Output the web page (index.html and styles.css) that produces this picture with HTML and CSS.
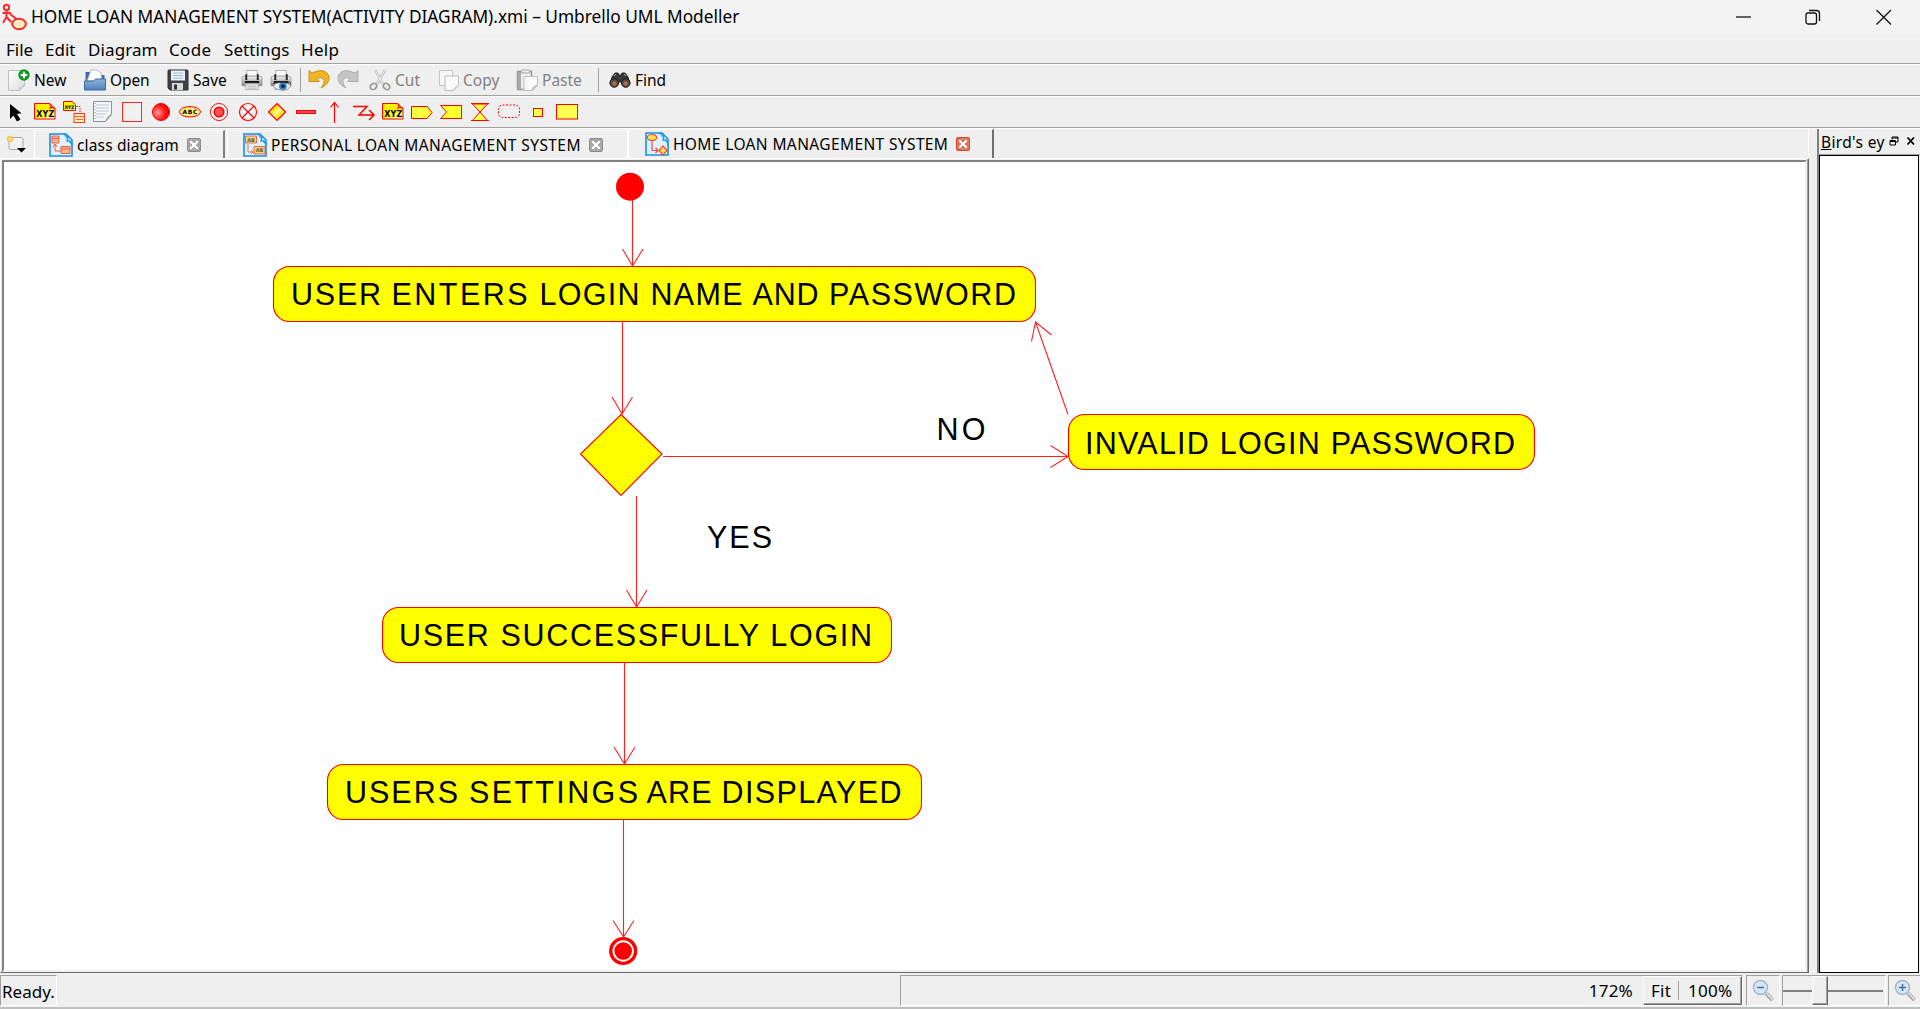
FILE: index.html
```html
<!DOCTYPE html>
<html lang="en">
<head>
<meta charset="utf-8">
<title>HOME LOAN MANAGEMENT SYSTEM(ACTIVITY DIAGRAM).xmi – Umbrello UML Modeller</title>
<link rel="stylesheet" href="styles.css">
</head>
<body>
<svg class="defs" width="0" height="0" aria-hidden="true">
  <defs>
    <linearGradient id="yel" x1="0" y1="0" x2="1" y2="1"><stop offset="0" stop-color="#fff200"/><stop offset=".5" stop-color="#fff200"/><stop offset="1" stop-color="#fffde0"/></linearGradient>
    <linearGradient id="stripe" x1="0" y1="0" x2="1" y2="1"><stop offset="0" stop-color="#fffbd0"/><stop offset=".35" stop-color="#ffe600"/><stop offset=".5" stop-color="#fff9b0"/><stop offset=".65" stop-color="#ffe600"/><stop offset="1" stop-color="#fff6a0"/></linearGradient>
    <linearGradient id="blue" x1="0" y1="0" x2="0" y2="1"><stop offset="0" stop-color="#8fb3dc"/><stop offset="1" stop-color="#4f80bb"/></linearGradient>
    <linearGradient id="page" x1="0" y1="0" x2="1" y2="1"><stop offset="0" stop-color="#fff"/><stop offset="1" stop-color="#dcdcdc"/></linearGradient>
    <linearGradient id="metal" x1="0" y1="0" x2="0" y2="1"><stop offset="0" stop-color="#f4f4f4"/><stop offset="1" stop-color="#8a8a8a"/></linearGradient>
    <radialGradient id="ball" cx=".3" cy=".55" r=".7"><stop offset="0" stop-color="#ff9c9c"/><stop offset=".6" stop-color="#ff1a1a"/><stop offset="1" stop-color="#e00000"/></radialGradient>
    <g id="doc"><path d="M1 1h16l6 6v16H1z" fill="#dff1ff" stroke="#1b8fe6" stroke-width="1.600"/><path d="M14 1c5 0 6 3 4 7c4-1 5 2 5 5" fill="#58b4f0" stroke="#1b8fe6" stroke-width="1.200"/></g>
    <g id="xyz"><path d="M1.500 3.500h15l5.500 5v10.500h-20.500z" fill="url(#yel)" stroke="#f00"/><path d="M15.500 3.500q4 1 1.500 4.500q4-1 5 1" fill="#ff0" stroke="#f00" stroke-width="1.200"/><text x="12.200" y="17.300" class="glyph" text-anchor="middle" font-size="8" textLength="18">XYZ</text></g>
    <g id="printer"><path d="M6 1h11v8H6z" fill="#fafafa" stroke="#aaa"/><path d="M8 7h7" stroke="#aaa"/><path d="M1 9q0-2 2-2h17q2 0 2 2v8H1z" fill="url(#metal)" stroke="#888" stroke-width=".7"/><path d="M4.500 5h2v6h-2zM16.500 5h2v6h-2z" fill="#222"/><path d="M4 13h15" stroke="#111" stroke-width="2"/><path d="M5 15h13v6H5z" fill="#e9e9e9" stroke="#999" stroke-width=".7"/><path d="M7 17.500h9M7 19.500h9" stroke="#bbb"/></g>
    <g id="lens"><path d="M14 14l6.500 7" stroke="#999" stroke-width="4"/><path d="M14 13.500l6.500 7" stroke="#ddd" stroke-width="2"/><circle cx="8.500" cy="8.500" r="7" fill="#d3e6f6" stroke="#a9b4c4" stroke-width="1.500"/></g>
    <g id="copybox"><path d="M1.500 1.500h13v15h-13z" fill="#f6f6f6" stroke="#c4c4c4"/><path d="M7 7h13.500v10l-5 4.500H7z" fill="#fafafa" stroke="#bcbcbc"/><path d="M15.500 21.500q1-4 5-4.500" fill="#ddd" stroke="#bbb"/></g>
  </defs>
</svg>

<div class="window">
  <header class="titlebar">
    <svg class="app-icon" viewBox="0 0 26 26"><g fill="none" stroke="#ff2a2a" stroke-width="2"><circle cx="5.500" cy="3.500" r="2.700"/><path d="M5.500 6v7M1.500 9h8.500M5.500 13l-3.500 6M5.500 13l4.500 5"/><path d="M9 10l9 7"/></g><ellipse cx="18" cy="20" rx="6.800" ry="5.300" fill="#fbeec0" stroke="#ff2a2a" stroke-width="2"/></svg>
    <h1 class="title">HOME LOAN MANAGEMENT SYSTEM(ACTIVITY DIAGRAM).xmi – Umbrello UML Modeller</h1>
    <div class="controls">
      <svg viewBox="0 0 16 16"><path d="M0 8h15" /></svg>
      <svg viewBox="0 0 16 16"><rect x="0" y="4" width="10.500" height="11" rx="2"/><path d="M3 1.500h7.500q3 0 3 3v7.500"/></svg>
      <svg viewBox="0 0 16 16"><path d="M.5 1l14.500 14.500M15 1L.5 15.500"/></svg>
    </div>
  </header>

  <nav class="menubar"><span class="m1">File</span><span class="m2">Edit</span><span class="m3">Diagram</span><span class="m4">Code</span><span class="m5">Settings</span><span class="m6">Help</span></nav>

  <div class="toolbar main">
    <div class="tool"><svg viewBox="0 0 22 22"><path d="M.5 1.500h16v15l-5 5H.5z" fill="url(#page)" stroke="#c0c0c0"/><path d="M11 21.500q1-5 5.500-5z" fill="#fff" stroke="#bbb"/><circle cx="16" cy="6" r="5.700" fill="#0c9a22"/><path d="M16 2.700v6.600M12.700 6h6.600" stroke="#fff" stroke-width="2.200"/></svg><span class="w-new">New</span></div>
    <div class="tool"><svg viewBox="0 0 22 22"><path d="M1.500 3h9l2 3h8v8h-19z" fill="#3f6ea8"/><path d="M3 12l4-11h6l4 3 1 8z" fill="#fff" stroke="#aaa" stroke-width=".8"/><path d="M.5 12h9l2-2h10v11H.5z" fill="url(#blue)" stroke="#3b6aa5"/></svg><span class="w-open">Open</span></div>
    <div class="tool"><svg viewBox="0 0 22 22"><path d="M1 2q0-1 1-1h18q1 0 1 1v19H3l-2-2z" fill="#404347" stroke="#2c2e31"/><path d="M4 1.500h14v10H4z" fill="#eaf1f8"/><path d="M6 4h10M6 6.500h10M6 9h10" stroke="#a9bccd"/><path d="M5 14h11v7H5z" fill="#d8d8d8"/><path d="M7 15.500h3v5H7z" fill="#333"/></svg><span class="w-save">Save</span></div>
    <div class="tool"><svg viewBox="0 0 23 22"><use href="#printer"/></svg></div>
    <div class="tool"><svg viewBox="0 0 23 22"><use href="#printer"/><path d="M3 17.500q5-5 10-3q6-1 9 3q-4 4.500-8 4.500q-6 0-11-4.500z" fill="#eef" stroke="#666" stroke-width=".6"/><circle cx="13.500" cy="17.500" r="4" fill="#2f7fc0"/><circle cx="13.500" cy="17.500" r="1.700" fill="#111"/><path d="M3 15q6-4 10-2q6-2 9 2" fill="none" stroke="#222"/></svg></div>
    <i class="sep"></i>
    <div class="tool"><svg viewBox="0 0 22 22"><path d="M1 1.500l3 2.500q13-6 17 3q1 8-8 12q5-6 2-9.500q-3-2-6 .5l2.500 2.500H1z" fill="#f0b429" stroke="#c68a0a" stroke-width=".9"/></svg></div>
    <div class="tool"><svg viewBox="0 0 22 22"><path d="M21 1.500l-3 2.500q-13-6-17 3q-1 8 8 12q-5-6-2-9.500q3-2 6 .5l-2.500 2.500H21z" fill="#c4c4c4" stroke="#aaa" stroke-width=".9"/></svg></div>
    <div class="tool off"><svg viewBox="0 0 22 22"><path d="M6.500 1l7 14M16 1L8 15" stroke="#bbb" stroke-width="2.600" fill="none"/><path d="M6.500 1l7 14M16 1L8 15" stroke="#f3f3f3" fill="none"/><ellipse cx="4.500" cy="17.500" rx="3.500" ry="2.700" transform="rotate(-40 4.500 17.500)" fill="none" stroke="#999" stroke-width="1.600"/><ellipse cx="17.500" cy="17.500" rx="3.500" ry="2.700" transform="rotate(40 17.500 17.500)" fill="none" stroke="#999" stroke-width="1.600"/></svg><span class="w-cut">Cut</span></div>
    <div class="tool off copy"><svg viewBox="0 0 22 22"><use href="#copybox"/></svg><span class="w-copy">Copy</span></div>
    <div class="tool off"><svg viewBox="0 0 22 22"><path d="M1.500 2.500h14v18h-14z" fill="#eee" stroke="#999" stroke-width="1.500"/><path d="M2 3v17h3V3z" fill="#aaa"/><path d="M5.500 1h8v3h-8z" fill="#eee" stroke="#aaa"/><path d="M8 7.500h13.500v9l-5 5H8z" fill="#fafafa" stroke="#bcbcbc"/><path d="M16 21.500q.5-5 5.500-5z" fill="#ddd" stroke="#bbb"/></svg><span class="w-paste">Paste</span></div>
    <i class="sep"></i>
    <div class="tool"><svg viewBox="0 0 22 22"><path d="M3 8l3-4h3l2 3 2-3h3l3 4 2 7h-8l-2-3-2 3H1z" fill="#3a3a3a" stroke="#222"/><circle cx="5.300" cy="14" r="4.300" fill="#4a4a4a" stroke="#1d1d1d"/><circle cx="16.700" cy="14" r="4.300" fill="#4a4a4a" stroke="#1d1d1d"/><circle cx="5.300" cy="14.500" r="2.300" fill="#b86a33"/><circle cx="16.700" cy="14.500" r="2.300" fill="#b86a33"/><path d="M5 7l2-2M15 5l2 2" stroke="#aaa"/></svg><span class="w-find">Find</span></div>
  </div>

  <div class="toolbar shapes">
    <svg viewBox="0 0 24 24"><path d="M6 4v15l3.500-3.500 3.500 6 3.500-2-3.500-5.500 4.500-.7z" fill="#000"/></svg>
    <svg viewBox="0 0 24 24"><use href="#xyz"/></svg>
    <svg viewBox="0 0 24 24"><path d="M1.500 1.500h8.500l3.500 3v6h-12z" fill="url(#yel)" stroke="#f00"/><text x="7.500" y="9.300" class="glyph" text-anchor="middle" font-size="4.800" textLength="10">XYZ</text><path d="M14.500 6.500h3.500v7" fill="none" stroke="#f00" stroke-dasharray="1.500 1"/><rect x="12" y="13.500" width="10.500" height="9" fill="#fff3a0" stroke="#f33"/><path d="M12 16.500h10M14 19.500h7" stroke="#f55"/></svg>
    <svg viewBox="0 0 24 24"><path d="M2.500 1.500h18v13l-6 7h-12z" fill="#f4f7f9" stroke="#8b9094"/><path d="M5 5h13M5 8h13M5 11h13M5 14h10M5 17h8" stroke="#b9c6cf"/><path d="M4 3v17" stroke="#888" stroke-dasharray="1 2"/><path d="M14.500 21.500q2-6 6-7z" fill="#ddd" stroke="#999"/></svg>
    <svg viewBox="0 0 24 24"><rect x="2.500" y="2.500" width="19" height="19" fill="#f1f1f1" stroke="#f22"/></svg>
    <svg viewBox="0 0 24 24"><circle cx="12" cy="12" r="8.500" fill="url(#ball)" stroke="#e00"/></svg>
    <svg viewBox="0 0 24 24"><ellipse cx="12" cy="11.800" rx="10.500" ry="5.200" fill="#ffef7a" stroke="#f00"/><text x="12" y="14" class="glyph" text-anchor="middle" font-size="6" textLength="15">ABC</text></svg>
    <svg viewBox="0 0 24 24"><circle cx="12" cy="12" r="8.500" fill="#fff" stroke="#f00"/><circle cx="12" cy="12" r="4.800" fill="#ff5050" stroke="#f00" stroke-width="1.600"/></svg>
    <svg viewBox="0 0 24 24"><circle cx="12" cy="12" r="8.500" fill="#fff" stroke="#f00" stroke-width="1.200"/><path d="M6 6l12 12M18 6L6 18" stroke="#f00" stroke-width="1.200"/></svg>
    <svg viewBox="0 0 24 24"><path d="M12 3.500l8.500 8.500-8.500 8.500L3.500 12z" fill="url(#stripe)" stroke="#f00" stroke-width="1.200"/></svg>
    <svg viewBox="0 0 24 24"><rect x="2.500" y="10.500" width="19" height="3" fill="#ff4a4a" stroke="#e00"/></svg>
    <svg viewBox="0 0 24 24"><path d="M11.500 23V3M7.500 7.500l4-5 4 5" fill="none" stroke="#f00" stroke-width="1.200"/></svg>
    <svg viewBox="0 0 24 24"><path d="M1 6.500h14L7 15h14.500M17 10l5 5-5 5" fill="none" stroke="#f00" stroke-width="1.500"/></svg>
    <svg viewBox="0 0 24 24"><use href="#xyz"/></svg>
    <svg viewBox="0 0 24 24"><path d="M1.500 6.500h15.500l5 6-5 6H1.500z" fill="#ffff40" stroke="#f00"/></svg>
    <svg viewBox="0 0 24 24"><path d="M1.500 5.500h21v13h-21l6-6.500z" fill="#ffff30" stroke="#f00"/></svg>
    <svg viewBox="0 0 24 24"><path d="M3 3.500h18M3 20.500h18" fill="none" stroke="#f00"/><path d="M4.500 4h15L12 12zM4.500 20.500h15L12 12z" fill="#ffff50" stroke="#f00"/></svg>
    <svg viewBox="0 0 24 24"><rect x="1.500" y="5" width="21" height="12.500" rx="4" fill="none" stroke="#f00" stroke-dasharray="2 1.500"/></svg>
    <svg viewBox="0 0 24 24"><rect x="7.500" y="8.500" width="9" height="8" fill="#ffff50" stroke="#f00"/></svg>
    <svg viewBox="0 0 24 24"><rect x="1.500" y="4.500" width="21" height="14.500" fill="#ffff50" stroke="#f00"/></svg>
  </div>

  <div class="body">
    <main class="pane">
      <div class="tabs">
        <div class="newtab"><svg viewBox="0 0 22 20"><path d="M3 2.500h12q2 0 2 2v8q0 2-2 2H5q-2 0-2-2z" fill="#f2f2f2" stroke="#aaa"/><circle cx="4" cy="4" r="3.200" fill="#f6c94c"/><circle cx="4" cy="4" r="1.300" fill="#fff3b0"/><path d="M11 13h9l-4.500 4.500z" fill="#000"/></svg></div>
        <div class="tab t1"><svg viewBox="0 0 24 24"><use href="#doc"/><g fill="#fbb98a" stroke="#f05a4a"><path d="M3 3h7v7H3zM12 13.500h9v7h-9z"/><path d="M3 5.500h7M12 16h9" /><path d="M6 11v7h6M4 14l2-3 2 3" fill="none"/></g></svg><span class="w-t1">class diagram</span><b class="close"></b></div>
        <div class="tab t2"><svg viewBox="0 0 24 24"><use href="#doc"/><g fill="#e8d08a" stroke="#e9603a" stroke-width=".9"><path d="M2.500 3h11v7h-11zM11 13.500h11v7.500H11z"/><path d="M5 11v8h5M8 17l2 2-2 2" fill="none"/></g><text x="8" y="8.500" class="glyph sm" text-anchor="middle" font-size="5">AB</text><text x="16.500" y="19.300" class="glyph sm" text-anchor="middle" font-size="5">AB</text></svg><span class="w-t2">PERSONAL LOAN MANAGEMENT SYSTEM</span><b class="close"></b></div>
        <div class="tab t3"><svg viewBox="0 0 24 24"><use href="#doc"/><g stroke="#ee4b3a" stroke-width="1.200" fill="#ffe14a"><ellipse cx="7" cy="5.500" rx="4.700" ry="3"/><path d="M18 14l4 4.500-4 4.500-4-4.500z"/><path d="M7 9v9.500h6M10.500 16l2.500 2.500-2.500 2.500" fill="none"/></g></svg><span class="w-t3">HOME LOAN MANAGEMENT SYSTEM</span><b class="close hot"></b></div>
      </div>
      <div class="frame">
        <svg class="canvas" viewBox="4 162 1801 808">
          <g class="line">
            <path d="M632.500 200V266M622.500 249l10 17 10.500-17"/>
            <path d="M622.500 322V414M612 397l10 17 10.500-17"/>
            <path d="M663 456.500H1068M1050.500 445.500l17.500 11-17.500 11"/>
            <path d="M1068 414.500L1035.500 322M1031.500 341.500l4-19.500 16 13"/>
            <path d="M636.500 496V607M626.500 590l10 17 10.500-17"/>
            <path d="M624.500 663V764M614 747l10.500 17 10.500-17"/>
            <path d="M623.500 820V937M613 920.500l10.500 16.500 10.500-16.500"/>
          </g>
          <circle cx="630" cy="186.700" r="14" fill="#f00"/>
          <g class="node">
            <rect x="273.500" y="266.500" width="762" height="55" rx="16"/>
            <path d="M621 414.500l41 39.500-41 41.500-40.500-41.500z"/>
            <rect x="1068.500" y="414.500" width="466" height="55" rx="16"/>
            <rect x="382.500" y="607.500" width="509" height="55" rx="16"/>
            <rect x="327.500" y="764.500" width="594" height="55" rx="16"/>
          </g>
          <circle cx="623.200" cy="951" r="12.400" fill="#fff" stroke="#f00" stroke-width="3.400"/>
          <circle cx="623.200" cy="951" r="8.800" fill="#f00"/>
          <g class="label">
            <text y="304.500"><tspan x="291" textLength="90">USER</tspan> <tspan x="391.500" textLength="136">ENTERS</tspan> <tspan x="539.500" textLength="100">LOGIN</tspan> <tspan x="650.500" textLength="92">NAME</tspan> <tspan x="752.500" textLength="66">AND</tspan> <tspan x="829" textLength="187">PASSWORD</tspan></text>
            <text x="936.500" y="440" textLength="49">NO</text>
            <text x="1085" y="453.500" textLength="430">INVALID LOGIN PASSWORD</text>
            <text x="707" y="548" textLength="65">YES</text>
            <text x="399" y="645.500" textLength="473">USER SUCCESSFULLY LOGIN</text>
            <text y="802.500"><tspan x="345" textLength="113">USERS</tspan> <tspan x="469" textLength="169">SETTINGS</tspan> <tspan x="646.500" textLength="65">ARE</tspan> <tspan x="721.500" textLength="180">DISPLAYED</tspan></text>
          </g>
        </svg>
      </div>
    </main>
    <aside class="dock">
      <div class="dock-head"><span class="dock-title"><u>B</u>ird's eye</span><svg viewBox="0 0 28 10"><path d="M3 3.500V1h6v5H7M3 2h6" /><path d="M1 4.500h5.500V9H1zM1 5.500h5.500"/><path d="M18.500 1.500l6.500 7M25 1.500l-6.500 7" stroke-width="1.800"/></svg></div>
      <div class="dock-view"></div>
    </aside>
  </div>

  <footer class="status">
    <div class="cell ready">Ready.</div>
    <div class="cell zoom"><span class="pct">172%</span><div class="btn"><span>Fit</span><span class="hundred">100%</span></div></div>
    <div class="cell mag"><svg viewBox="0 0 23 23"><use href="#lens"/><path d="M5 8.500h7" stroke="#4a6f9c" stroke-width="1.500"/></svg></div>
    <div class="cell slider"><div class="track"></div><div class="thumb"></div><div class="track rest"></div></div>
    <div class="cell mag last"><svg viewBox="0 0 23 23"><use href="#lens"/><path d="M5 8.500h7M8.500 5v7" stroke="#4a6f9c" stroke-width="1.500"/></svg></div>
  </footer>
</div>
</body>
</html>
```
FILE: styles.css
```css
* { box-sizing: border-box; }
body { margin: 0; background: #efefef; color: #000; overflow: hidden; }
.defs { position: absolute; }
.window {
  width: 1920px; height: 1009px; display: flex; flex-direction: column;
  background: #efefef; font: 17px "Noto Sans", sans-serif;
}
svg { display: block; flex: none; overflow: visible; }
span { white-space: nowrap; }
.glyph { font-family: "DejaVu Sans", sans-serif; font-weight: bold; fill: #000; }
.glyph.sm { fill: #6b6420; }

.titlebar { height: 34px; background: #f3f3f3; display: flex; align-items: center; }
.app-icon { width: 26px; height: 26px; margin: 0 4px 0 1px; }
.title { margin: 0; font-size: 17.3px; font-weight: 400; line-height: 34px; white-space: nowrap; }
.controls { margin-left: auto; display: flex; gap: 54px; padding-right: 28px; }
.controls svg { width: 16px; height: 16px; fill: none; stroke: #111; stroke-width: 1.3; }

.menubar { height: 30px; border-bottom: 1px solid #a0a0a0; display: flex; padding-left: 6px; line-height: 31px; }
.m1 { width: 39px; }
.m2 { width: 43px; }
.m3 { width: 81px; letter-spacing: .1px; }
.m4 { width: 55px; letter-spacing: .3px; }
.m5 { width: 77px; letter-spacing: .1px; }
.m6 { letter-spacing: .3px; }

.toolbar { height: 32px; border-top: 1px solid #fff; border-bottom: 1px solid #a0a0a0; align-items: center; }
.main {
  display: grid; padding-left: 8px; font-size: 15.5px;
  grid-template-columns: 76px 83px 74px 29px 30px 8px 29px 32px 69px 78px 82px 11px 80px;
}
.tool { display: flex; align-items: center; gap: 4px; height: 30px; }
.tool svg { width: 22px; height: 22px; }
.off { color: #808080; }
.copy { gap: 3px; }
.w-open { letter-spacing: -.1px; }
.sep { width: 1px; height: 24px; background: #a0a0a0; }
.shapes { display: flex; gap: 5px; padding-left: 4px; }
.shapes svg { width: 24px; height: 24px; }

.body { flex: 1; display: flex; min-height: 0; border-top: 1px solid #fff; }
.pane { width: 1809px; display: flex; flex-direction: column; }
.tabs { height: 29px; display: flex; border-right: 1px solid #fff; font-size: 15.5px; }
.newtab { width: 34px; padding: 6px 0 0 6px; }
.newtab svg { width: 22px; height: 20px; }
.tab { display: flex; align-items: center; border-top: 1px solid #f8f8f8; border-left: 1px solid #fff; height: 28px; margin-top: 1px; }
.tab svg { width: 24px; height: 24px; margin-right: 4px; }
.t1 { width: 191px; padding-left: 14px; border-right: 2px solid #808080; }
.t2 { width: 401px; margin-left: 2px; padding-left: 15px; border-right: 1px solid #fff; }
.t3 { width: 366px; padding: 0 0 1px 16px; margin-top: 0; height: 29px; border-right: 2px solid #707070; }
.w-t1 { width: 110px; letter-spacing: .15px; }
.w-t2 { width: 318px; letter-spacing: .42px; }
.w-t3 { width: 283px; letter-spacing: .38px; }
.close {
  width: 14px; height: 14px; border: 1px solid #8d8d8d; border-radius: 2px;
  background: linear-gradient(45deg, transparent 43%, #fff 43% 57%, transparent 57%) center/8px 8px no-repeat,
    linear-gradient(-45deg, transparent 43%, #fff 43% 57%, transparent 57%) center/8px 8px no-repeat, #a9a9a9;
}
.hot { border-color: #d8402a; background-color: #e07a5c; }
.frame {
  flex: 1; min-height: 0; border: 1px solid; border-color: #fff #696969 #696969 #fff;
  padding: 1px; box-shadow: inset -1px -1px #a0a0a0;
}
.canvas {
  width: 1805px; height: 812px; background: #fff; border: 2px solid;
  border-color: #808080 #f0f0f0 #f0f0f0 #808080;
}
.line { fill: none; stroke: #ff2020; stroke-width: 1.1; }
.node { fill: #ff0; stroke: #f00; stroke-width: 1.1; }
.label { font: 30.5px "Liberation Sans", Arial, sans-serif; }

.dock { flex: 1; margin-left: 8px; border-left: 2px solid #808080; display: flex; flex-direction: column; }
.dock-head { height: 26px; display: flex; align-items: center; padding: 0 0 2px 2px; font-size: 15.5px; border-bottom: 1px solid #a0a0a0; }
.dock-title { width: 64px; height: 24px; line-height: 27px; overflow: hidden; letter-spacing: .35px; }
.dock-head svg { width: 28px; height: 10px; margin-left: 4px; fill: none; stroke: #000; }
.dock-view { flex: 1; background: #fff; border: 1px solid #000; margin-right: 1px; }

.status { height: 36px; padding-top: 2px; display: flex; border-bottom: 2px solid #c0c0c0; }
.cell { height: 31px; border: 1px solid; border-color: #a0a0a0 #fff #fff #a0a0a0; display: flex; align-items: center; flex: none; }
.ready { width: 57px; padding: 2px 0 0 1px; margin-right: 843px; }
.zoom { width: 843px; justify-content: flex-end; letter-spacing: .25px; }
.pct { margin-right: 10px; }
.btn {
  width: 99px; height: 29px; display: flex; align-items: center; padding-left: 7px;
  border: 1px solid; border-color: #fff #696969 #696969 #fff; box-shadow: inset -1px -1px #a0a0a0;
}
.hundred { border-left: 1px solid #a0a0a0; margin-left: 7px; padding-left: 9px; line-height: 19px; }
.mag { width: 34px; margin-left: 3px; padding-left: 5px; }
.mag svg { width: 23px; height: 23px; }
.slider { width: 104px; margin-left: 2px; }
.track { width: 29px; height: 2px; margin-left: 0; background: #808080; }
.thumb { width: 16px; height: 29px; border: 1px solid; border-color: #fff #696969 #696969 #fff; box-shadow: inset -1px -1px #a0a0a0; }
.rest { width: 55px; }
.last { margin-left: 2px; border-right: 0; }
```
